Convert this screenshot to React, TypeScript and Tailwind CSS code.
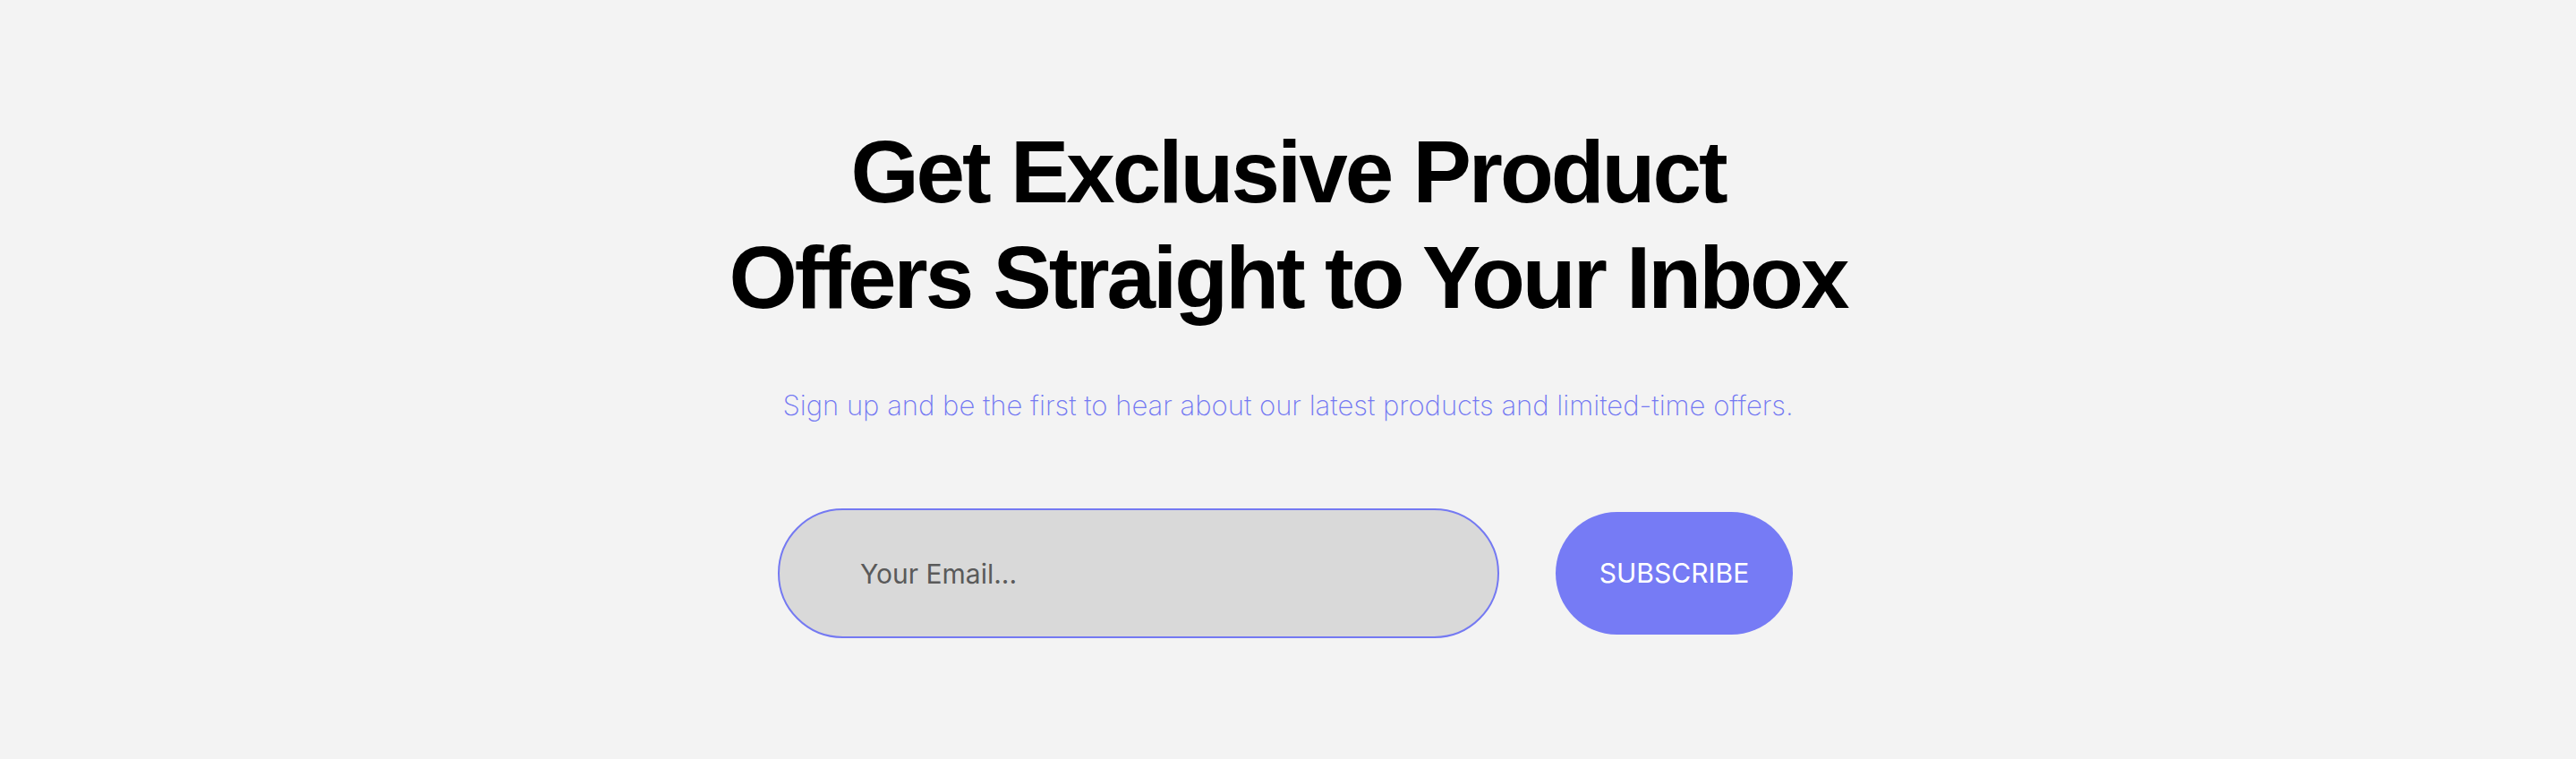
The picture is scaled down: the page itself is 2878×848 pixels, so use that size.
import React from "react";

export default function App() {
  return (
    <div className="min-h-screen w-full bg-[#f3f3f3] flex flex-col items-center pt-[133px]">
      <h1
        className="text-center text-[98px] leading-[118px] font-bold text-black tracking-[-3px]"
        style={{ fontFamily: '"Liberation Sans", Arial, sans-serif' }}
      >
        Get Exclusive Product
        <br />
        Offers Straight to Your Inbox
      </h1>
      <p
        className="mt-[61px] text-[31px] leading-[45px] font-extralight text-[#7479f2] text-center"
        style={{ fontFamily: 'Inter, "Noto Sans", sans-serif' }}
      >
        Sign up and be the first to hear about our latest products and limited-time offers.
      </p>
      <form
        className="mt-[93px] mr-[6px] flex items-center gap-[63px]"
        onSubmit={(e) => e.preventDefault()}
        style={{ fontFamily: 'Inter, "Noto Sans", sans-serif' }}
      >
        <input
          type="email"
          placeholder="Your Email..."
          className="w-[806px] h-[145px] rounded-full border-2 border-[#7479f2] bg-[#d9d9d9] pl-[90px] pr-8 text-[30px] text-[#333] placeholder:text-[#5a5a5a] outline-none"
        />
        <button
          type="submit"
          className="w-[265px] h-[137px] rounded-full bg-[#767bf5] text-white text-[30px] flex items-center justify-center"
        >
          SUBSCRIBE
        </button>
      </form>
    </div>
  );
}
